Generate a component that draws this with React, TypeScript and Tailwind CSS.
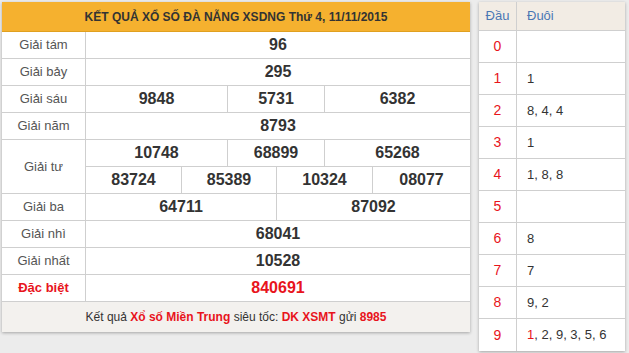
import React from "react";

const F = { fontFamily: '"Liberation Sans", Arial, sans-serif' };

function Label({ children, red }: { children: React.ReactNode; red?: boolean }) {
  return (
    <div
      className={
        "w-[84px] shrink-0 flex items-center justify-center text-[13px] border-r border-[#cfcfcf] " +
        (red ? "text-[#e8141c] font-bold" : "text-[#555]")
      }
    >
      {children}
    </div>
  );
}

function Num({ w, children, red, last }: { w: string; children: React.ReactNode; red?: boolean; last?: boolean }) {
  return (
    <div
      className={
        w +
        " flex items-center justify-center font-bold text-[16px] " +
        (last ? "" : "border-r border-[#cfcfcf] ") +
        (red ? "text-[#e8141c]" : "text-[#333]")
      }
    >
      {children}
    </div>
  );
}

function Row({ children }: { children: React.ReactNode }) {
  return <div className="flex h-[27px] border-b border-[#cfcfcf]">{children}</div>;
}

const loto: [string, React.ReactNode][] = [
  ["0", ""],
  ["1", "1"],
  ["2", "8, 4, 4"],
  ["3", "1"],
  ["4", "1, 8, 8"],
  ["5", ""],
  ["6", "8"],
  ["7", "7"],
  ["8", "9, 2"],
  [
    "9",
    <>
      <span className="text-[#e8141c]">1</span>, 2, 9, 3, 5, 6
    </>,
  ],
];

export default function App() {
  return (
    <div className="w-[629px] h-[353px] bg-[#ececec] flex items-start gap-[9px] pl-[2px] pt-[2px]" style={F}>
      <div className="w-[468px] bg-white shadow-[0_1px_3px_rgba(0,0,0,0.3)]">
        <div className="h-[30px] bg-[#f5b12f] flex items-center justify-center font-bold text-[12px] text-[#333] border-b border-[#e0a020]">
          KẾT QUẢ XỔ SỐ ĐÀ NẴNG XSDNG Thứ 4, 11/11/2015
        </div>
        <Row>
          <Label>Giải tám</Label>
          <Num w="flex-1" last>96</Num>
        </Row>
        <Row>
          <Label>Giải bảy</Label>
          <Num w="flex-1" last>295</Num>
        </Row>
        <Row>
          <Label>Giải sáu</Label>
          <Num w="w-[142px]">9848</Num>
          <Num w="w-[97px]">5731</Num>
          <Num w="flex-1" last>6382</Num>
        </Row>
        <Row>
          <Label>Giải năm</Label>
          <Num w="flex-1" last>8793</Num>
        </Row>
        <div className="flex h-[54px] border-b border-[#cfcfcf]">
          <Label>Giải tư</Label>
          <div className="flex-1 flex flex-col">
            <div className="flex h-[27px] border-b border-[#cfcfcf]">
              <Num w="w-[142px]">10748</Num>
              <Num w="w-[97px]">68899</Num>
              <Num w="flex-1" last>65268</Num>
            </div>
            <div className="flex flex-1">
              <Num w="w-[96px]">83724</Num>
              <Num w="w-[95px]">85389</Num>
              <Num w="w-[96px]">10324</Num>
              <Num w="flex-1" last>08077</Num>
            </div>
          </div>
        </div>
        <Row>
          <Label>Giải ba</Label>
          <Num w="w-[191px]">64711</Num>
          <Num w="flex-1" last>87092</Num>
        </Row>
        <Row>
          <Label>Giải nhì</Label>
          <Num w="flex-1" last>68041</Num>
        </Row>
        <Row>
          <Label>Giải nhất</Label>
          <Num w="flex-1" last>10528</Num>
        </Row>
        <Row>
          <Label red>Đặc biệt</Label>
          <Num w="flex-1" red last>840691</Num>
        </Row>
        <div className="h-[30px] bg-[#f3f1ee] flex items-center justify-center text-[12px] text-[#333]">
          <span>
            Kết quả <b className="text-[#e8141c]">Xổ số Miền Trung</b> siêu tốc:{" "}
            <b className="text-[#e8141c]">DK XSMT</b> gửi <b className="text-[#e8141c]">8985</b>
          </span>
        </div>
      </div>

      <div className="w-[146px] bg-white shadow-[0_1px_3px_rgba(0,0,0,0.3)]">
        <div className="flex h-[29px] bg-[#f2ece4] border-b border-[#cfcfcf] text-[13px] text-[#4a77b4]">
          <div className="w-[38px] flex items-center justify-center border-r border-[#cfcfcf]">Đầu</div>
          <div className="flex-1 flex items-center pl-[10px]">Đuôi</div>
        </div>
        {loto.map(([d, t], i) => (
          <div
            key={d}
            className={"flex h-[32px] " + (i < loto.length - 1 ? "border-b border-[#cfcfcf]" : "")}
          >
            <div className="w-[38px] flex items-center justify-center border-r border-[#cfcfcf] text-[14px] text-[#e8141c]">
              {d}
            </div>
            <div className="flex-1 flex items-center pl-[10px] text-[13px] text-[#333]">{t}</div>
          </div>
        ))}
      </div>
    </div>
  );
}
